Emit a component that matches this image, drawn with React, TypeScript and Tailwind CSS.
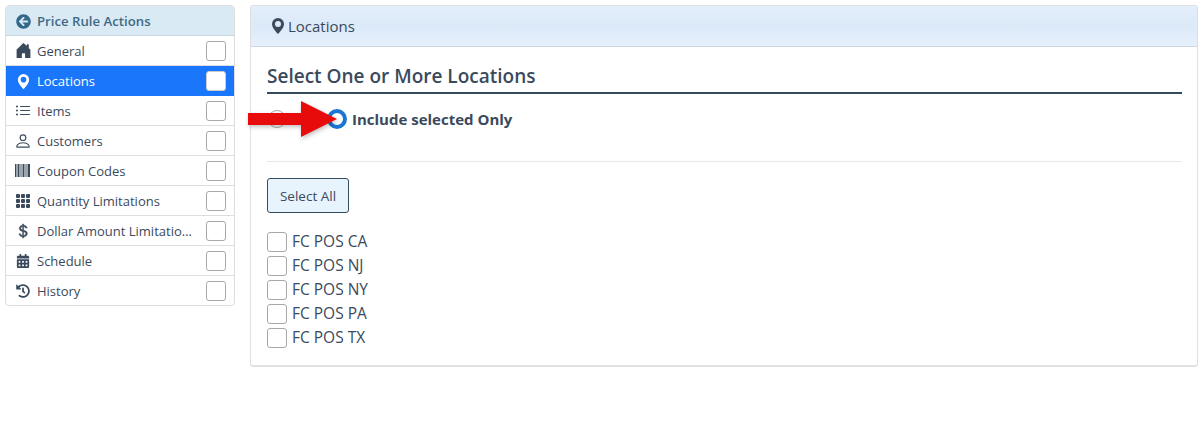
import { FaArrowCircleLeft, FaCalendarAlt, FaHistory } from "react-icons/fa";
import {
  BsCurrencyDollar,
  BsGeoAltFill,
  BsGrid3X3GapFill,
  BsHouseDoorFill,
  BsListUl,
  BsPerson,
} from "react-icons/bs";

function Barcode() {
  return (
    <svg width="16" height="13" viewBox="0 0 16 13" fill="currentColor">
      <rect x="0" width="1.5" height="13" />
      <rect x="2.5" width="2" height="13" />
      <rect x="5.5" width="1" height="13" />
      <rect x="7.5" width="2" height="13" />
      <rect x="10.5" width="1" height="13" />
      <rect x="12.5" width="2.5" height="13" />
    </svg>
  );
}

const actions = [
  { name: "General", icon: <BsHouseDoorFill className="w-[17px] h-[17px]" /> },
  { name: "Locations", icon: <BsGeoAltFill className="w-[15px] h-[15px]" />, active: true },
  { name: "Items", icon: <BsListUl className="w-4 h-4" /> },
  { name: "Customers", icon: <BsPerson className="w-[18px] h-[18px]" /> },
  { name: "Coupon Codes", icon: <Barcode /> },
  { name: "Quantity Limitations", icon: <BsGrid3X3GapFill className="w-4 h-4" /> },
  { name: "Dollar Amount Limitatio…", icon: <BsCurrencyDollar className="w-4 h-4 stroke-current stroke-[0.5]" /> },
  { name: "Schedule", icon: <FaCalendarAlt className="w-[14px] h-[14px]" /> },
  { name: "History", icon: <FaHistory className="w-[14px] h-[14px]" /> },
];

const locations = ["FC POS CA", "FC POS NJ", "FC POS NY", "FC POS PA", "FC POS TX"];

export default function App() {
  return (
    <div className="relative h-[437px] w-[1203px] overflow-hidden bg-white pt-[5px] pl-[5px] font-['Open_Sans',sans-serif] text-[#3a4a5c] flex gap-[15px] items-start">
      {/* Sidebar */}
      <div className="w-[230px] shrink-0 rounded border border-[#dedede] overflow-hidden text-[13px]">
        <div className="h-[30px] pt-[2px] bg-[#d9eaf4] border-b border-[#c5d6e0] flex items-center pl-[10px] gap-[6px] text-[13.2px] font-semibold text-[#3f6a85]">
          <FaArrowCircleLeft className="w-[15px] h-[15px] text-[#34688a]" />
          Price Rule Actions
        </div>
        {actions.map((a, i) => (
          <div
            key={a.name}
            className={
              a.active
                ? "h-[30px] flex items-center bg-[#1a76fb] text-white"
                : i === actions.length - 1
                  ? "h-[29px] flex items-center"
                  : "h-[30px] flex items-center border-b border-[#dedede]"
            }
          >
            <span className="w-[31px] shrink-0 flex justify-center pl-[3px]">{a.icon}</span>
            <span className={a.active ? "w-[163px] truncate pt-[1px]" : "w-[163px] truncate pt-[2px]"}>{a.name}</span>
            <span
              className={
                a.active
                  ? "ml-auto mr-[8px] w-5 h-5 rounded-[3px] bg-white border border-[#cccccc]"
                  : "ml-auto mr-[8px] w-5 h-5 rounded-[3px] bg-white border border-[#a8a8a8]"
              }
            />
          </div>
        ))}
      </div>

      {/* Main card */}
      <div className="w-[948px] h-[362px] shrink-0 rounded-[3px] border border-[#e0e0e0] border-b-2">
        <div className="h-[41px] bg-gradient-to-b from-[#e3eefb] via-[#dce9f8] to-[#e6f0fb] border-b border-[#cdd6e4] flex items-center pl-[19px] gap-[2px] text-[15px]">
          <BsGeoAltFill className="w-[16px] h-[16px] text-[#3a4a5c]" />
          Locations
        </div>
        <div className="pl-[16px] pr-[15px]">
          <h2 className="h-[47px] pt-[17px] border-b-2 border-[#344a5e] text-[19px] leading-[25px] font-semibold">
            Select One or More Locations
          </h2>
          <div className="h-[68px] border-b border-[#e8e8e8] flex items-start pt-[15px]">
            <span className="w-[18px] h-[18px] mt-[1px] rounded-full border border-[#a8a8a8] ml-[1px]" />
            <span className="ml-[41px] w-[20px] h-[20px] rounded-full border-[4px] border-[#1a76d2] bg-white" />
            <span className="ml-[5px] text-[15px] leading-[20px] font-bold">Include selected Only</span>
          </div>
          <button className="mt-[16px] block w-[82px] h-[35px] pt-[1px] rounded-[3px] border border-[#344a5e] bg-[#e8f4fd] text-[13.5px]">
            Select All
          </button>
          <div className="mt-[17px] flex flex-col">
            {locations.map((l) => (
              <label key={l} className="h-[24px] flex items-center gap-[5px] text-[15.5px]">
                <span className="w-5 h-5 rounded-[3px] border border-[#a8a8a8] bg-white" />
                {l}
              </label>
            ))}
          </div>
        </div>
      </div>

      {/* Red annotation arrow */}
      <svg className="absolute left-[248px] top-[101px] drop-shadow-[1px_2px_2px_rgba(0,0,0,0.25)]" width="90" height="36" viewBox="0 0 90 36">
        <path d="M0 12H53V0L89 18L53 36V24H0Z" fill="#e80b0b" />
      </svg>
    </div>
  );
}
